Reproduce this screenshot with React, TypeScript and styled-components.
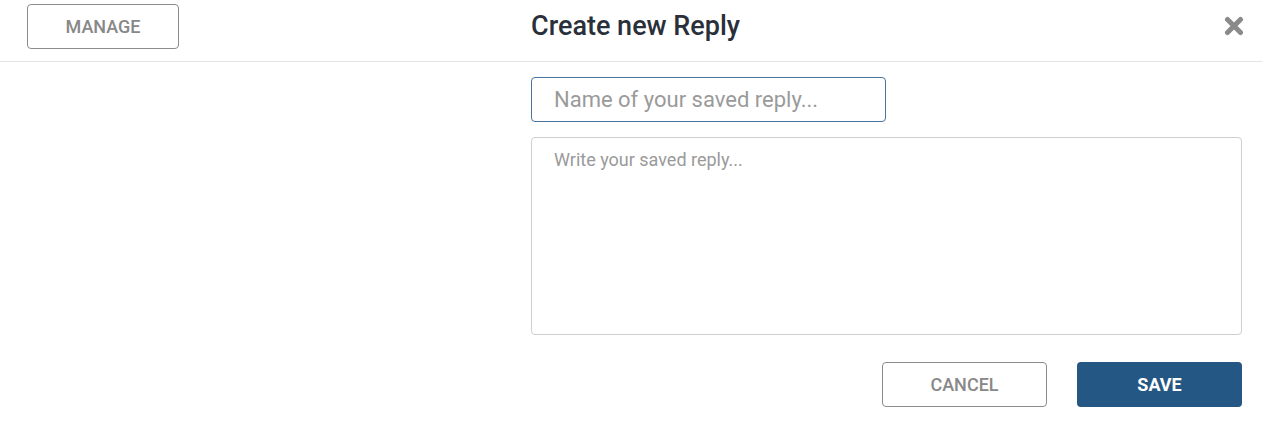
import React from "react";
import styled, { createGlobalStyle } from "styled-components";

const Global = createGlobalStyle`
  html, body { margin: 0; padding: 0; background: #fff; }
  body { font-family: Roboto, "Liberation Sans", sans-serif; }
  * { box-sizing: border-box; }
`;

const Page = styled.div`
  width: 1262px;
  height: 429px;
  background: #fff;
`;

const Header = styled.header`
  display: grid;
  grid-template-columns: 531px 1fr;
  height: 62px;
  border-bottom: 1px solid #e3e3e3;
`;

const HeaderLeft = styled.div`
  padding: 4px 0 0 27px;
`;

const HeaderRight = styled.div`
  display: flex;
  align-items: flex-start;
  justify-content: space-between;
  padding-right: 18px;
`;

const Title = styled.h1`
  margin: 0;
  padding-top: 9px;
  font-size: 27px;
  font-weight: 500;
  line-height: 34px;
  color: #2a303a;
  letter-spacing: 0;
`;

const CloseButton = styled.button`
  margin-top: 16px;
  width: 20px;
  height: 20px;
  padding: 0;
  border: none;
  background: none;
  cursor: pointer;
  display: flex;
`;

const OutlineButton = styled.button<{ $w: number }>`
  width: ${(p) => p.$w}px;
  height: 45px;
  border: 1px solid #8c8c8c;
  border-radius: 4px;
  background: #fff;
  color: #888;
  font-family: Roboto, "Liberation Sans", sans-serif;
  font-size: 18px;
  font-weight: 500;
  letter-spacing: 0;
  text-transform: uppercase;
  cursor: pointer;
`;

const PrimaryButton = styled.button`
  width: 165px;
  height: 45px;
  border: none;
  border-radius: 4px;
  background: #245784;
  color: #fff;
  font-family: Roboto, "Liberation Sans", sans-serif;
  font-size: 18px;
  font-weight: 700;
  text-transform: uppercase;
  cursor: pointer;
`;

const Body = styled.main`
  display: grid;
  grid-template-columns: 531px 711px;
`;

const Form = styled.div`
  grid-column: 2;
  display: flex;
  flex-direction: column;
  padding-top: 15px;
`;

const NameInput = styled.input`
  width: 355px;
  height: 45px;
  border: 1px solid #47739c;
  border-radius: 4px;
  padding: 0 22px;
  font-family: Roboto, "Liberation Sans", sans-serif;
  font-size: 22px;
  color: #333;
  outline: none;
  &::placeholder { color: #9a9a9a; }
`;

const ReplyArea = styled.textarea`
  margin-top: 15px;
  width: 711px;
  height: 198px;
  border: 1px solid #cfcfcf;
  border-radius: 4px;
  padding: 11px 22px;
  font-family: Roboto, "Liberation Sans", sans-serif;
  font-size: 18px;
  line-height: 22px;
  color: #333;
  resize: none;
  outline: none;
  &::placeholder { color: #9a9a9a; }
`;

const Actions = styled.div`
  display: flex;
  justify-content: flex-end;
  gap: 30px;
  margin-top: 27px;
`;

export default function App() {
  return (
    <Page>
      <Global />
      <Header>
        <HeaderLeft>
          <OutlineButton $w={152}>Manage</OutlineButton>
        </HeaderLeft>
        <HeaderRight>
          <Title>Create new Reply</Title>
          <CloseButton aria-label="Close">
            <svg width="20" height="20" viewBox="0 0 20 20">
              <path d="M3.5 3.5 L16.5 16.5 M16.5 3.5 L3.5 16.5" stroke="#8a8a8a" strokeWidth="5" strokeLinecap="round" />
            </svg>
          </CloseButton>
        </HeaderRight>
      </Header>
      <Body>
        <Form>
          <NameInput placeholder="Name of your saved reply..." />
          <ReplyArea placeholder="Write your saved reply..." />
          <Actions>
            <OutlineButton $w={165}>Cancel</OutlineButton>
            <PrimaryButton>Save</PrimaryButton>
          </Actions>
        </Form>
      </Body>
    </Page>
  );
}
